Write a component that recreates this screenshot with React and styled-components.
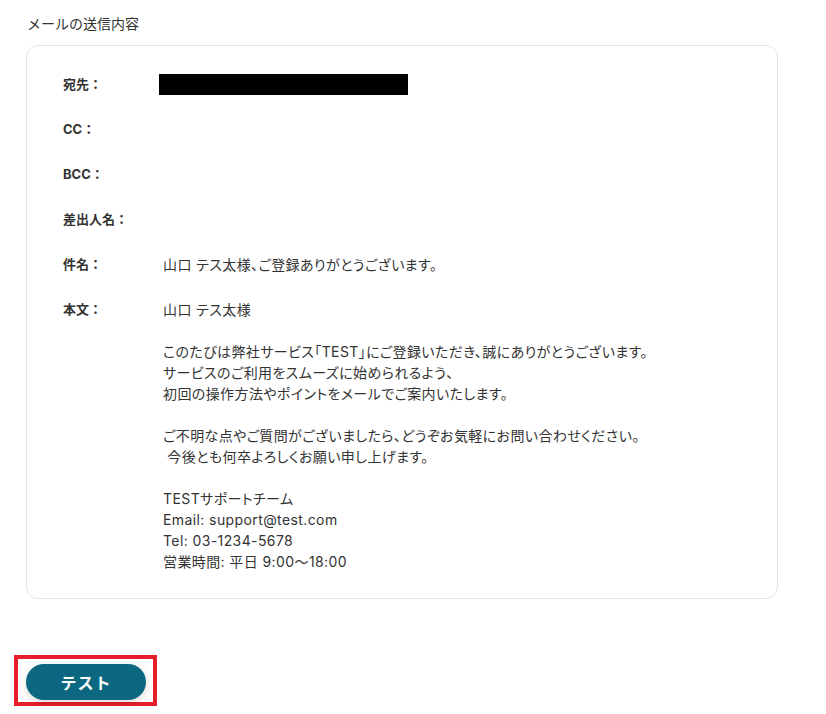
import React from "react";
import styled, { createGlobalStyle } from "styled-components";

const GlobalStyle = createGlobalStyle`
  html, body {
    margin: 0;
    padding: 0;
    background: #ffffff;
  }
  body {
    font-family: Inter, "Noto Sans CJK JP", "Noto Sans", sans-serif;
    color: #333333;
  }
`;

const Page = styled.div`
  padding: 14px 48px 0 26px;
  display: flex;
  flex-direction: column;
  align-items: flex-start;
`;

const SectionTitle = styled.div`
  font-size: 14px;
  line-height: 20px;
  color: #333;
  margin: 0 0 11px 1px;
`;

const Card = styled.div`
  align-self: stretch;
  border: 1px solid #e3e3e3;
  border-radius: 12px;
  padding: 28px 36px 26px 36px;
  display: grid;
  grid-template-columns: 100px 1fr;
  row-gap: 24px;
`;

const Label = styled.div`
  font-size: 13px;
  line-height: 21px;
  font-weight: 700;
  color: #333;
`;

const Value = styled.div`
  font-size: 14px;
  line-height: 21px;
  letter-spacing: 0.4px;
  font-feature-settings: "palt";
  color: #333;
  white-space: pre-wrap;
  min-height: 21px;
`;

const Masked = styled.div`
  width: 249px;
  height: 21px;
  margin-left: -4px;
  background: #000;
`;

const Annotation = styled.div`
  margin: 56px 0 0 -12px;
  border: 4px solid #e51e2a;
  padding: 5px 7px 2px 8px;
  display: inline-flex;
`;

const TestButton = styled.button`
  width: 120px;
  height: 36px;
  border: none;
  border-radius: 18px;
  background: #0b6880;
  color: #ffffff;
  font-family: Inter, "Noto Sans CJK JP", sans-serif;
  font-size: 16px;
  font-weight: 700;
  letter-spacing: 1px;
  box-shadow: 0 3px 8px rgba(0, 0, 0, 0.15);
  cursor: pointer;
`;

const body = `山口 テス太様

このたびは弊社サービス「TEST」にご登録いただき、誠にありがとうございます。
サービスのご利用をスムーズに始められるよう、
初回の操作方法やポイントをメールでご案内いたします。

ご不明な点やご質問がございましたら、どうぞお気軽にお問い合わせください。
 今後とも何卒よろしくお願い申し上げます。

TESTサポートチーム
Email: support@test.com
Tel: 03-1234-5678
営業時間: 平日 9:00〜18:00`;

const rows = [
  { label: "宛先：", masked: true },
  { label: "CC：", value: "" },
  { label: "BCC：", value: "" },
  { label: "差出人名：", value: "" },
  { label: "件名：", value: "山口 テス太様、ご登録ありがとうございます。" },
  { label: "本文：", value: body },
];

export default function App() {
  return (
    <>
      <GlobalStyle />
      <Page>
        <SectionTitle>メールの送信内容</SectionTitle>
        <Card>
          {rows.map((r) => (
            <React.Fragment key={r.label}>
              <Label>{r.label}</Label>
              {r.masked ? <Masked /> : <Value>{r.value}</Value>}
            </React.Fragment>
          ))}
        </Card>
        <Annotation>
          <TestButton>テスト</TestButton>
        </Annotation>
      </Page>
    </>
  );
}
